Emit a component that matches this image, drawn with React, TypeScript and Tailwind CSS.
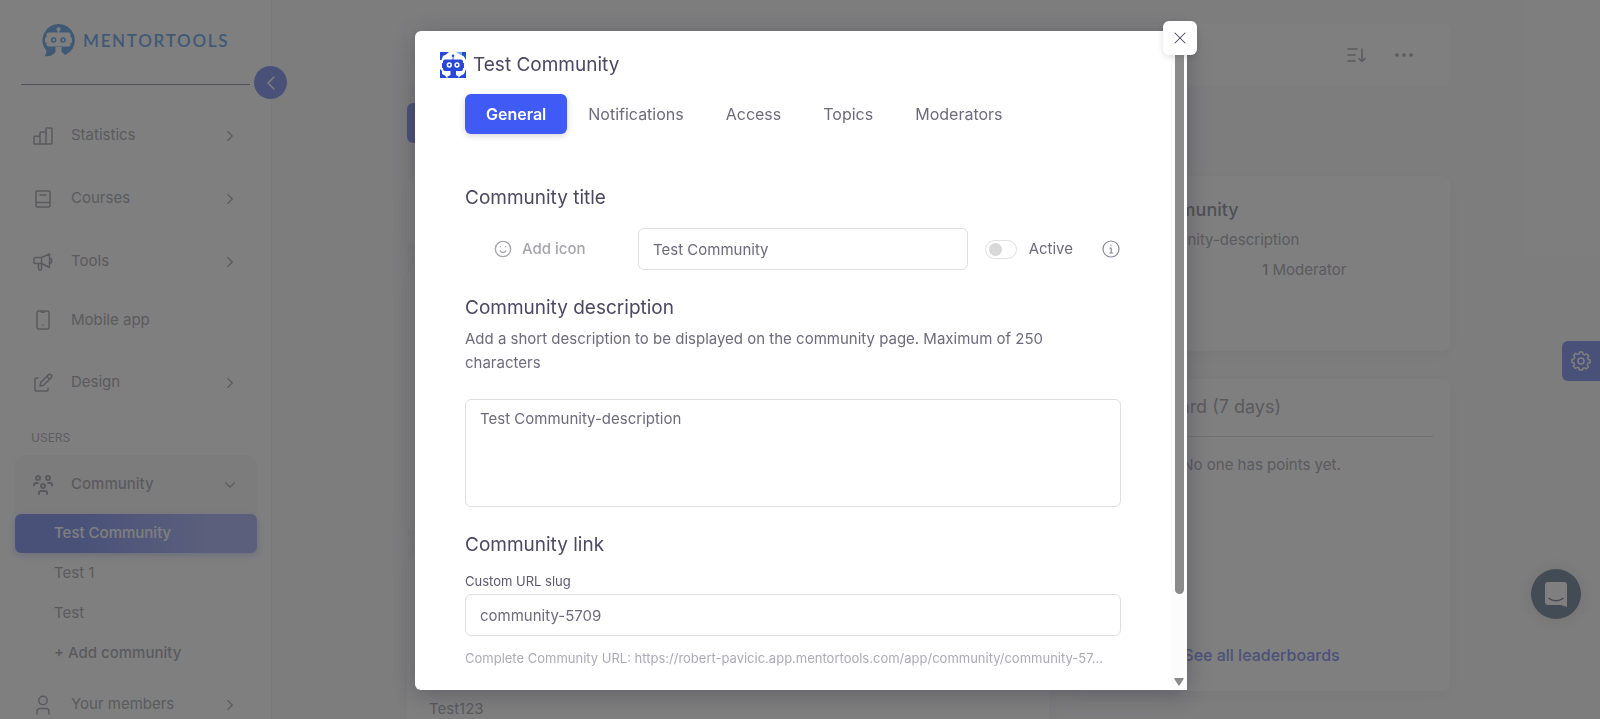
import { useState } from "react";
import type { ReactNode } from "react";
import { ChevronDown, ChevronLeft, ChevronRight, X } from "lucide-react";

const stroke = {
  fill: "none",
  stroke: "currentColor",
  strokeLinecap: "round",
  strokeLinejoin: "round",
} as const;

function Icon({ children, className = "size-5", width = 1.5 }: { children: ReactNode; className?: string; width?: number }) {
  return (
    <svg viewBox="0 0 20 20" className={className} strokeWidth={width} {...stroke} aria-hidden="true">
      {children}
    </svg>
  );
}

const StatsIcon = () => (
  <Icon>
    <path d="M1 18V11.2a1 1 0 0 1 1-1h5V18M7 18V7a1 1 0 0 1 1-1h5v12M13 18V3a1 1 0 0 1 1-1h4a1 1 0 0 1 1 1v14a1 1 0 0 1-1 1H2a1 1 0 0 1-1-1" />
  </Icon>
);

const BookIcon = () => (
  <Icon>
    <rect x="3" y="2" width="14" height="16" rx="1" />
    <path d="M3 13.5h14M7 6h6" />
  </Icon>
);

const MegaphoneIcon = () => (
  <Icon>
    <path d="M1 6.5a1 1 0 0 1 1-1h6.5L16.5 2v13.500L8.500 11.500H2a1 1 0 0 1-1-1zM8.500 5.500v6M5.500 11.500v5.500a1 1 0 0 0 1 1h1a1 1 0 0 0 1-1v-5.500M16.500 6c3 .5 3 5 0 5.500" />
  </Icon>
);

const PhoneIcon = () => (
  <Icon>
    <rect x="4" y="1" width="12" height="18" rx="1.500" />
    <path d="M8 1.500c0 1 4 1 4 0M10 15h.01" />
  </Icon>
);

const DesignIcon = () => (
  <Icon>
    <path d="M5 5H3a1 1 0 0 0-1 1v11a1 1 0 0 0 1 1h11a1 1 0 0 0 1-1v-2" />
    <path d="M7 13l.8-3.600 7.500-7.500a1.900 1.900 0 0 1 2.800 2.800l-7.500 7.500zM14 3.500l2.700 2.700" />
  </Icon>
);

const CommunityIcon = () => (
  <Icon width={2}>
    <circle cx="5" cy="3" r="2" />
    <circle cx="15" cy="3" r="2" />
    <circle cx="10" cy="11" r="2" />
    <path d="M1 10.500V9.500A1.500 1.500 0 0 1 2.500 8H5M19 10.500V9.500A1.500 1.500 0 0 0 17.500 8H15M6 19v-1.500A1.500 1.500 0 0 1 7.500 16h5a1.500 1.500 0 0 1 1.500 1.500V19" />
  </Icon>
);

const UserIcon = () => (
  <Icon>
    <circle cx="10" cy="5.500" r="4.200" />
    <path d="M4 19v-2.500A3 3 0 0 1 7 13.500h6a3 3 0 0 1 3 3V19" />
  </Icon>
);

function Logo() {
  return (
    <a href="#" className="flex h-[33px] items-center gap-2 pl-[21px] text-[#0068d8]">
      <svg viewBox="0 0 33 33" className="size-[33px]" aria-hidden="true">
        <path
          d="M16.500 0a16.200 16.200 0 0 1 11 28.200L23 31l-3.500-3.500V23h-6v5c-2 3-6 5-11 4 1.500-2 2.200-4 1.800-5.500A16.200 16.200 0 0 1 16.500 0z"
          fill="currentColor"
        />
        <circle cx="16.500" cy="5.300" r="2" fill="#fff" />
        <path d="M15.700 5.500h1.600v3.200h-1.600z" fill="#fff" />
        <path
          d="M6.500 8.500h20a2 2 0 0 1 2 2v3h1.500v5h-1.500v2a2 2 0 0 1-2 2h-20a2 2 0 0 1-2-2v-2H3v-5h1.500v-3a2 2 0 0 1 2-2z"
          fill="#fff"
        />
        <circle cx="11.700" cy="16" r="2" fill="none" stroke="currentColor" strokeWidth="1.600" />
        <circle cx="21" cy="16" r="2" fill="none" stroke="currentColor" strokeWidth="1.600" />
      </svg>
      <span className="font-[Lato,sans-serif] text-[17px] font-semibold tracking-widest">MENTORTOOLS</span>
    </a>
  );
}

function CommunityAvatar() {
  return (
    <svg viewBox="0 0 26 26" className="size-[26px]" aria-hidden="true">
      <rect width="26" height="26" rx="1" fill="#fff" />
      <path d="M0 0h9L6 2.500 3 4 1.500 8H0zM0 17l2 2 0 3 3 1.500L7 26H0zM26 17v9h-8l3-2.500L24 22z" fill="#2a48d8" />
      <path d="M16 0h7v4l-3-1.500z" fill="#6fb0e0" />
      <path d="M22 0h4v8l-2-3.500-2-1.500z" fill="#2a48d8" />
      <circle cx="13" cy="3.800" r="1.300" fill="#2a48d8" />
      <path d="M12.600 4h.9v4h-.9z" fill="#2a48d8" />
      <path
        d="M5 7.500h16a2 2 0 0 1 2 2V11h1v5h-1v1a2 2 0 0 1-2 2h-5v4l2.500 1.500V26h-11v-1.500L10.500 23v-4H5a2 2 0 0 1-2-2v-1H2v-5h1V9.500a2 2 0 0 1 2-2z"
        fill="#2a48d8"
      />
      <circle cx="9.300" cy="13" r="1.900" fill="#2a48d8" stroke="#fff" strokeWidth="1.500" />
      <circle cx="17" cy="13" r="1.900" fill="#2a48d8" stroke="#fff" strokeWidth="1.500" />
    </svg>
  );
}

function NavItem({ icon, label, arrow = true, className = "h-[63px]" }: { icon: ReactNode; label: string; arrow?: boolean; className?: string }) {
  return (
    <a href="#" className={`flex items-center gap-[18px] px-[18px] ${className}`}>
      {icon}
      <span className="flex-1">{label}</span>
      {arrow && <ChevronRight className="size-[18px]" strokeWidth={1.5} />}
    </a>
  );
}

function Sidebar() {
  return (
    <aside className="relative w-[272px] shrink-0 border-r border-[#ececf0] bg-white pt-6">
      <div className="mx-[21px]">
        <Logo />
        <hr className="mt-[27px] border-[#4b4b66]" />
      </div>
      <button
        aria-label="Collapse menu"
        className="absolute -right-4 top-[66px] grid size-[33px] place-items-center rounded-full bg-[#2c48e8] text-white"
      >
        <ChevronLeft className="size-6" strokeWidth={1.5} />
      </button>
      <nav className="mr-3.5 ml-[15px] mt-[19px]">
        <NavItem icon={<StatsIcon />} label="Statistics" />
        <NavItem icon={<BookIcon />} label="Courses" />
        <NavItem icon={<MegaphoneIcon />} label="Tools" />
        <NavItem icon={<PhoneIcon />} label="Mobile app" arrow={false} className="mb-1 h-[54px]" />
        <NavItem icon={<DesignIcon />} label="Design" />
        <div className="px-4 pt-[15px] pb-2 text-xs leading-[18px] text-[#777785]">USERS</div>
        <button className="flex h-[59px] w-full items-center gap-[18px] rounded-t-lg bg-[#f5f5f6] px-[18px] text-left font-medium">
          <CommunityIcon />
          <span className="flex-1">Community</span>
          <ChevronDown className="size-[18px]" strokeWidth={1.5} />
        </button>
        <a
          href="#"
          className="flex h-[39px] items-center rounded-md bg-linear-to-r from-[#2c48e8] from-25% to-[#6f80f0] to-80% pl-[39px] font-medium text-white shadow-[0_2px_6px_#405bf577]"
        >
          Test Community
        </a>
        <a href="#" className="flex h-10 items-center pl-[39px]">
          Test 1
        </a>
        <a href="#" className="flex h-10 items-center pl-[39px]">
          Test
        </a>
        <button className="flex h-10 items-center pl-[39px] font-medium">+ Add community</button>
        <NavItem icon={<UserIcon />} label="Your members" />
      </nav>
    </aside>
  );
}

function RightColumn() {
  return (
    <div className="flex w-[377px] flex-col gap-7">
      <section className="h-[175px] rounded-lg bg-white px-[25px] pt-5 shadow-[0_4px_18px_#4b465c1a]">
        <h2 className="text-lg leading-7 font-medium text-[#444050]">Test Community</h2>
        <p className="mt-1 leading-6">Test Community-description</p>
        <p className="mt-1 ml-auto w-[165px] pl-0.5 leading-7">
          <b className="font-medium">1</b> Moderator
        </p>
      </section>
      <section className="flex h-[312px] flex-col rounded-lg bg-white px-[17px] pt-3.5 pb-[22px] shadow-[0_4px_18px_#4b465c1a]">
        <h2 className="border-b border-[#c5c5cf] px-2 pb-[15px] text-lg leading-7">Leaderboard (7 days)</h2>
        <p className="mt-4 text-center leading-6">No one has points yet.</p>
        <a href="#" className="mt-auto text-center text-base leading-7 font-medium text-[#2c48e8]">
          See all leaderboards
        </a>
      </section>
    </div>
  );
}

function Page() {
  return (
    <div className="flex h-full bg-[#f9f9fa] opacity-50">
      <Sidebar />
      <main className="flex-1 pl-[135px] pr-[150px] pt-6">
        <div className="mx-auto max-w-[1043px]">
          <header className="flex h-[62px] items-center justify-end gap-7 rounded-lg bg-white pr-9">
            <button aria-label="Sort">
              <Icon>
                <path d="M2 4h9M2 10h7M2 16h7M16 4v12M13 13.500l3 3 3-3" />
              </Icon>
            </button>
            <button aria-label="More">
              <svg viewBox="0 0 20 20" className="size-5" fill="currentColor" aria-hidden="true">
                <circle cx="3" cy="10" r="1.800" />
                <circle cx="10" cy="10" r="1.800" />
                <circle cx="17" cy="10" r="1.800" />
              </svg>
            </button>
          </header>
          <div className="mt-[17px] h-10 w-24 rounded-md bg-[#2c48e8]" />
          <div className="mt-[33px] flex gap-6">
            <div className="flex flex-1 flex-col gap-6">
              <div className="h-[70px] rounded-lg bg-white shadow-[0_4px_18px_#4b465c1a]" />
              <div className="h-[260px] rounded-lg bg-white shadow-[0_4px_18px_#4b465c1a]" />
              <div className="flex h-60 rounded-lg bg-white px-[22px] pt-36 shadow-[0_4px_18px_#4b465c1a]">Test123</div>
            </div>
            <RightColumn />
          </div>
        </div>
      </main>
      <button
        aria-label="Settings"
        className="absolute right-0 top-[341px] grid h-10 w-[38px] place-items-center rounded-l-md bg-[#2c48e8] text-white"
      >
        <Icon>
          <circle cx="10" cy="10" r="3" />
          <path d="M8.500 1h3l.6 2.300 1.500.6 2-1.100 2.100 2.100-1.100 2 .6 1.500L19 8.700v3l-2.100.6-.6 1.500 1.100 2-2.100 2.100-2-1.100-1.500.6L11.500 19h-3l-.6-2.100-1.500-.6-2 1.100-2.100-2.100 1.100-2-.6-1.500L1 11.500v-3l2.100-.6.6-1.500-1.100-2 2.100-2.100 2 1.100 1.500-.6z" />
        </Icon>
      </button>
      <button
        aria-label="Open chat"
        className="absolute right-[19px] bottom-[100px] grid size-[50px] place-items-center rounded-full bg-[#113355] shadow-[0_1px_20px_#0003]"
      >
        <svg viewBox="0 0 24 26" className="h-[26px] w-6" aria-hidden="true">
          <path d="M4 1h16a3 3 0 0 1 3 3v22l-6-2H4a3 3 0 0 1-3-3V4a3 3 0 0 1 3-3z" fill="#fff" />
          <path d="M5 17.500c4 3 10 3 14 0" fill="none" stroke="#113355" strokeWidth="1.500" strokeLinecap="round" />
        </svg>
      </button>
    </div>
  );
}

const tabs = ["General", "Notifications", "Access", "Topics", "Moderators"];

function CommunityModal() {
  const [tab, setTab] = useState("General");
  const [active, setActive] = useState(false);

  return (
    <div className="fixed inset-0 flex justify-center bg-black/50 pt-[31px] pb-[29px] pl-0.5">
      <div role="dialog" aria-label="Test Community" className="relative flex w-full max-w-[772px] rounded-l-md bg-white shadow-[0_4px_24px_#2f2b3d66]">
        <div className="min-w-0 flex-1 overflow-hidden pt-[21px] pl-[25px] pr-[50px]">
          <div className="flex items-center gap-[7px]">
            <CommunityAvatar />
            <h1 className="text-[19px] leading-[26px] text-[#4b4861]">Test Community</h1>
          </div>
          <div className="pl-[25px]">
            <div role="tablist" className="mt-4 flex">
              {tabs.map((t) => (
                <button
                  key={t}
                  role="tab"
                  aria-selected={tab === t}
                  onClick={() => setTab(t)}
                  className={`h-10 rounded-md px-[21px] text-base ${
                    tab === t ? "bg-[#405bf5] font-semibold text-white shadow-[0_2px_6px_#2f2b3d33]" : ""
                  }`}
                >
                  {t}
                </button>
              ))}
            </div>

            <label htmlFor="title" className="mt-[50px] block text-[19px] leading-7 text-[#4b4861]">
              Community title
            </label>
            <div className="mt-4 flex items-center">
              <button className="flex w-[173px] items-center gap-2.5 pl-[29px] font-medium text-[#a5a5ab]">
                <Icon className="size-[18px]">
                  <circle cx="10" cy="10" r="8.500" />
                  <path d="M7 7.500h.01M13 7.500h.01M7 12c1.500 2.300 4.500 2.300 6 0" />
                </Icon>
                Add icon
              </button>
              <input id="title" defaultValue="Test Community" className="h-[42px] min-w-0 flex-1 rounded-md border border-[#dfdfe3] px-3.5" />
              <label className="ml-[17px] flex items-center gap-3">
                <input type="checkbox" checked={active} onChange={() => setActive(!active)} className="peer sr-only" />
                <span className="flex h-[19px] w-8 items-center rounded-full border border-[#dfdfe3] px-[3px] peer-checked:justify-end">
                  <span className="size-[13px] rounded-full bg-[#d8d8d8]" />
                </span>
                Active
              </label>
              <button aria-label="About the active state" className="ml-7 text-[#8a8799]">
                <Icon className="size-5" width={1.2}>
                  <circle cx="10" cy="10" r="8" />
                  <path d="M10 6.200h.01M9 9.200h1.200V14M8.800 14h2.800" />
                </Icon>
              </button>
            </div>

            <label htmlFor="description" className="mt-6 block text-[19px] leading-7 text-[#4b4861]">
              Community description
            </label>
            <p className="mt-[5px] leading-6">
              Add a short description to be displayed on the community page. Maximum of 250 characters
            </p>
            <textarea
              id="description"
              defaultValue="Test Community-description"
              className="mt-6 block h-[108px] w-full resize-none rounded-md border border-[#dfdfe3] px-3.5 py-[7px] leading-6"
            />

            <h2 className="mt-6 text-[19px] leading-7 text-[#4b4861]">Community link</h2>
            <label htmlFor="slug" className="mt-3 block text-[13px] leading-5 text-[#5d5a70]">
              Custom URL slug
            </label>
            <input id="slug" defaultValue="community-5709" className="mt-[3px] h-[42px] w-full rounded-md border border-[#dfdfe3] px-3.5" />
            <p className="mt-3 truncate text-[13px] leading-5 text-[#acaab5]">
              Complete Community URL: https://robert-pavicic.app.mentortools.com/app/community/community-57...
            </p>
          </div>
        </div>
        <div className="flex w-4 flex-col items-center justify-between bg-[#fcfcfc] pb-1">
          <div className="h-[86%] w-[9px] rounded-full bg-[#8b8b8b]" />
          <svg viewBox="0 0 10 8" className="h-2 w-2.5" aria-hidden="true">
            <path d="M1 0h8q1 0 .6 1L5.800 7q-.8 1-1.600 0L.4 1Q0 0 1 0z" fill="#8b8b8b" />
          </svg>
        </div>
        <button
          aria-label="Close"
          className="absolute -top-[10px] -right-[10px] grid size-[34px] place-items-center rounded-md bg-white text-[#4b4861] shadow-[0_2px_6px_#2f2b3d26]"
        >
          <X className="size-5" strokeWidth={1.25} />
        </button>
      </div>
    </div>
  );
}

export default function App() {
  return (
    <div className="relative h-dvh overflow-hidden bg-white font-[Inter,'Liberation_Sans',sans-serif] text-[15px] text-[#6d6b7b]">
      <Page />
      <CommunityModal />
    </div>
  );
}
